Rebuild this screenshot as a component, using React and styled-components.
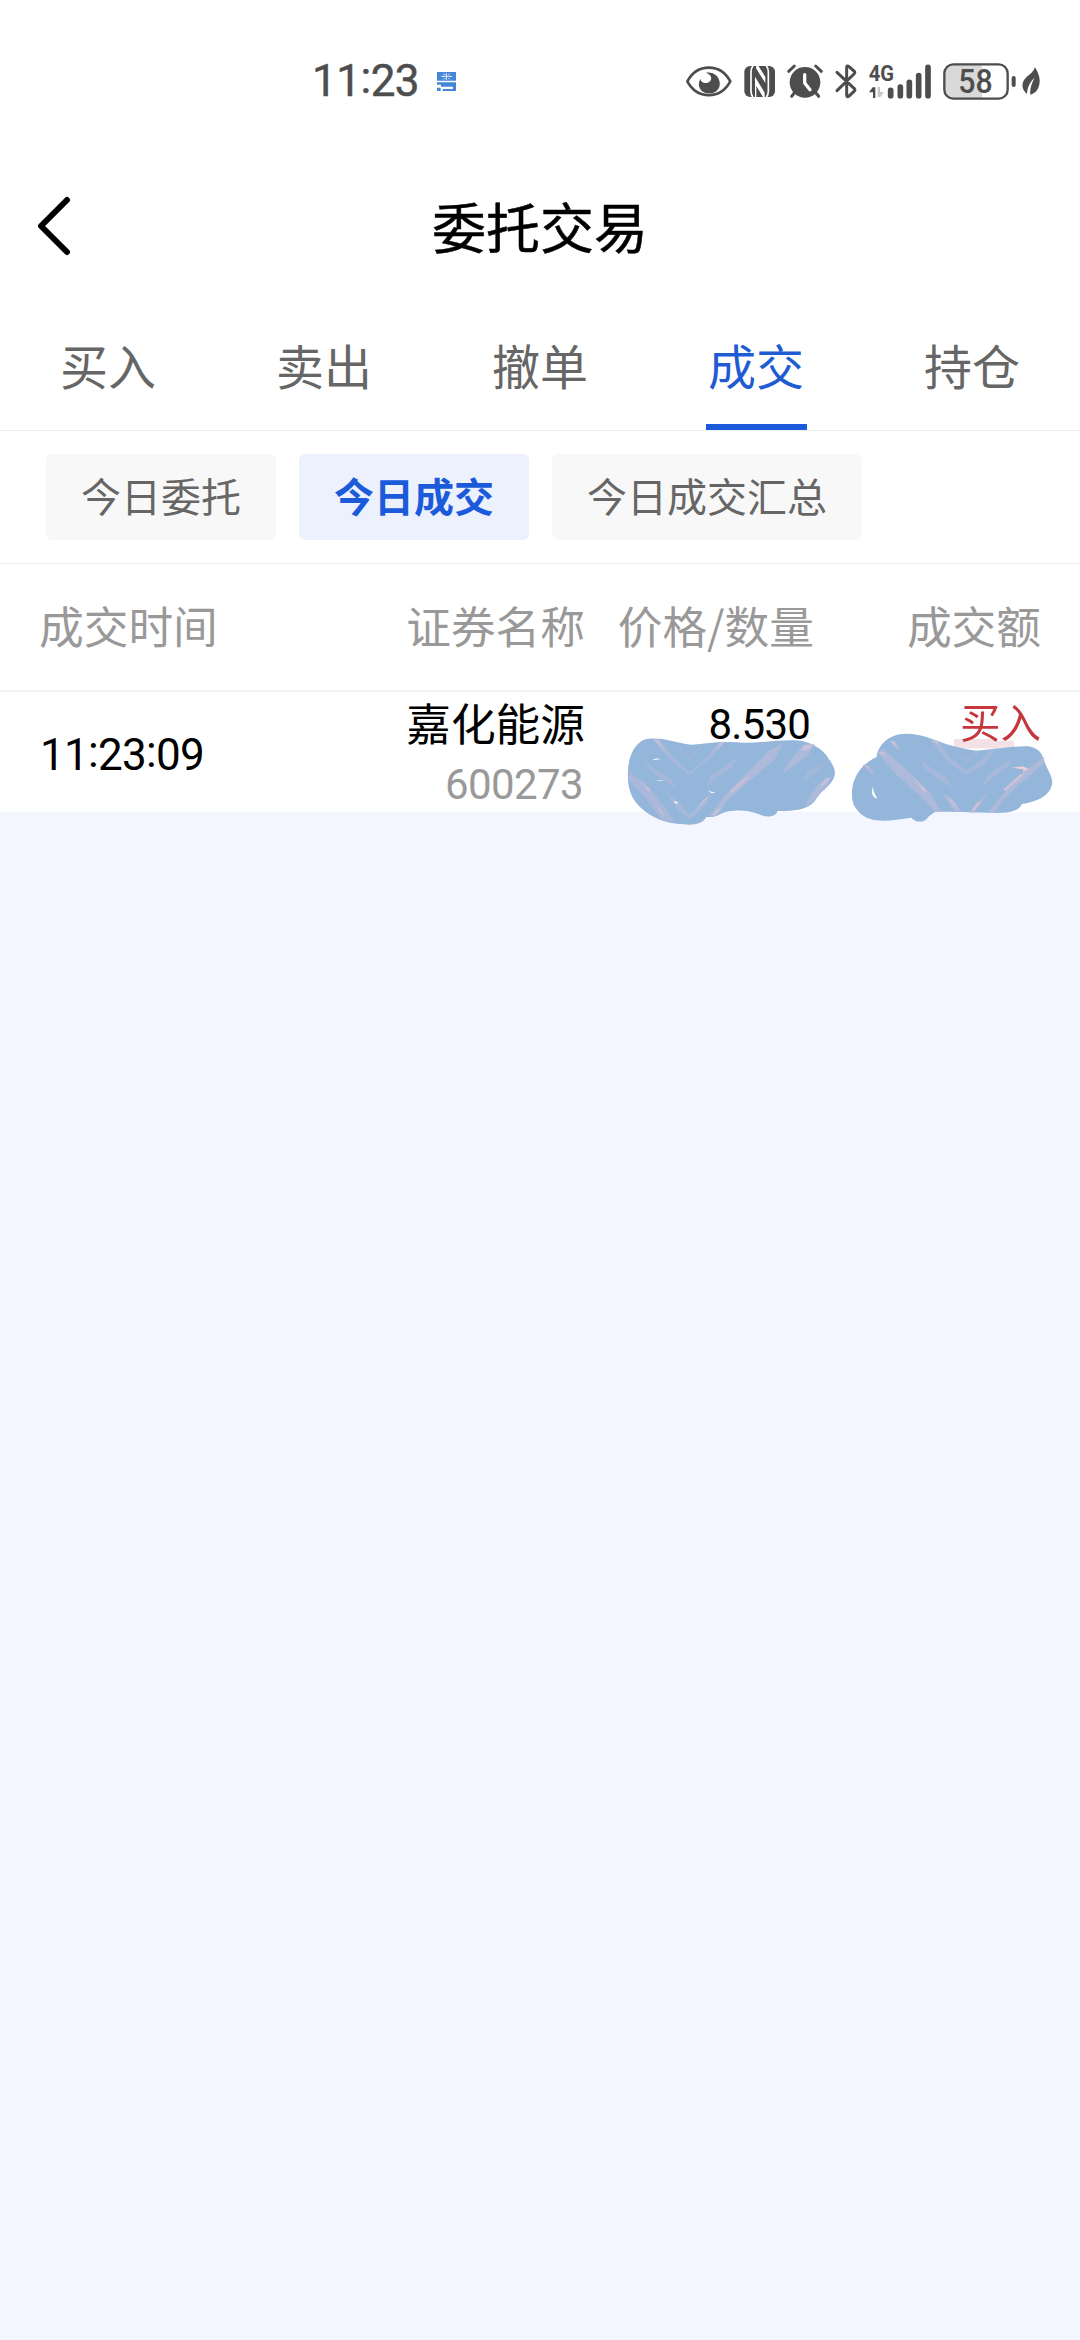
import { Fragment } from "react";
import styled, { createGlobalStyle } from "styled-components";

const tabs = ["买入", "卖出", "撤单", "成交", "持仓"];
const filters = ["今日委托", "今日成交", "今日成交汇总"];

export default function App() {
  return (
    <>
      <GlobalStyle />
      <Screen>
        <StatusBar />
        <Header>
          <BackIcon viewBox="0 0 36 60">
            <path d="M31 4 L5 30 L31 56" />
          </BackIcon>
          <Title>委托交易</Title>
        </Header>
        <Tabs>
          {tabs.map((tab) => (
            <Tab key={tab} $active={tab === "成交"}>{tab}</Tab>
          ))}
        </Tabs>
        <Filters>
          {filters.map((filter) => (
            <Chip key={filter} $active={filter === "今日成交"}>{filter}</Chip>
          ))}
        </Filters>
        <TableHead>
          <span>成交时间</span>
          <span>证券名称</span>
          <span>价格/数量</span>
          <span>成交额</span>
        </TableHead>
        <Row>
          <TimeCell><Clock time="11:23:09" /></TimeCell>
          <Cell>
            <StockName>嘉化能源</StockName>
            <StockCode>600273</StockCode>
          </Cell>
          <Cell>
            <Price>8.530</Price>
          </Cell>
          <Cell>
            <Side>买入</Side>
          </Cell>
          <AmountMask />
          <TotalMask />
        </Row>
      </Screen>
    </>
  )
}

function Clock({ time }) {
  return time.split(":").map((part, index) => (
    <Fragment key={index}>
      {index > 0 && <Colon>:</Colon>}
      {part}
    </Fragment>
  ))
}

function StatusBar() {
  return (
    <Status>
      <StatusTime><Clock time="11:23" /></StatusTime>
      <AppIcon viewBox="0 0 57 57">
        <path fill="#4387d6" d="M0 0H57V26H0Z M0 31H57V57H17V51H48V44H12V38H0Z M0 47H11V57H0Z" />
        <path stroke="#e8f2ff" strokeWidth="3" d="M28 3V24 M13 13H45 M19 5L23 9 M38 5L34 9 M19 22L23 18 M38 22L34 18" />
      </AppIcon>
      <Icons>
        <Icon $width={48} viewBox="45 60 144 120">
          <path d="M52 121 C82 66 151 66 181 121 C151 176 82 176 52 121Z" fill="none" stroke="#4d4d4d" strokeWidth="8" strokeLinejoin="round" />
          <path d="M107 96 C126 99 130 119 113 125 C101 129 92 122 91 114 C80 133 90 157 117 157 C141 157 154 139 148 119 C143 101 124 91 107 96Z" />
        </Icon>
        <Icon $width={33} $gap={10} viewBox="219 60 99 120">
          <rect x="223" y="75" width="92" height="93" rx="17" />
          <path d="M249 74 Q243 82 243 92 V150 Q243 162 249 169 M289 74 Q295 82 295 92 V150 Q295 162 289 169" fill="none" stroke="#fff" strokeWidth="5" />
          <path d="M259 74 L265 74 L286 108 V126 L258 82Z M255 107 L284 155 V168 H279 L259 135 V168 H255Z" fill="#fff" />
        </Icon>
        <Icon $width={38} $gap={10} viewBox="348 60 114 120">
          <circle cx="405" cy="124" r="46" />
          <path d="M356 91 L373 75 M454 91 L437 75 M374 154 L365 166 M436 154 L446 166" fill="none" stroke="#4d4d4d" strokeWidth="9" strokeLinecap="round" />
          <path d="M404 101 V126 L420 146" fill="none" stroke="#fff" strokeWidth="10" strokeLinecap="round" strokeLinejoin="round" />
        </Icon>
        <Icon $width={24} $gap={10} viewBox="492 60 72 120">
          <path d="M501 94 L553 143 Q557 147 552 151 L536 166 Q530 169 530 163 V80 Q530 72 536 76 L552 90 Q557 94 552 99 L501 149" fill="none" stroke="#4d4d4d" strokeWidth="9" strokeLinecap="round" strokeLinejoin="round" />
        </Icon>
        <Icon $width={64} $gap={10} viewBox="24 60 192 120">
          <text x="26" y="120" fontSize="66" fontWeight="700" fontFamily="Roboto, sans-serif" textLength="76" lengthAdjust="spacingAndGlyphs">4G</text>
          <path d="M27 154 L38 139 H46 V171 H39 V154Z" />
          <path d="M53 138 H60 V152 L71 153 L61 169 H53Z" fill="#c9c9c9" />
          <path d="M92 148 V164 M121 138 V164 M148 124 V164 M176 104 V164 M204 79 V164" fill="none" stroke="#4d4d4d" strokeWidth="17" strokeLinecap="round" />
        </Icon>
        <Icon $width={74} $gap={10} viewBox="246 60 222 120">
          <path d="M278 70 H366 V173 H278 Q252 173 252 147 V96 Q252 70 278 70Z" fill="#d9d9d9" />
          <rect x="253" y="70" width="190" height="103" rx="27" fill="none" stroke="#4d4d4d" strokeWidth="7" />
          <rect x="455" y="105" width="12" height="33" rx="6" />
          <text x="295" y="156" fontSize="97" fontWeight="500" fontFamily="Roboto, sans-serif" textLength="103" lengthAdjust="spacingAndGlyphs">58</text>
        </Icon>
        <Icon $width={20} $gap={5} viewBox="483 60 60 120">
          <path d="M525 79 C532 91 539 104 539 119 C539 142 527 157 511 161 C509 144 514 128 524 110 C509 124 502 139 501 159 C484 146 482 123 500 108 C512 98 521 92 525 79Z" />
        </Icon>
      </Icons>
    </Status>
  )
}

// hand-painted strokes over the traded quantity
function AmountMask() {
  return (
    <Mask $left={615} viewBox="0 0 690 420">
      <path fill="#94b6db" d="M100 131 C150 126 185 145 232 149 C275 147 310 137 380 143 C430 145 490 134 540 136 C590 138 625 165 640 190 C655 210 662 225 659 240 C654 262 640 272 628 284 C610 296 607 310 596 322 C575 345 530 350 488 348 C482 368 450 368 432 358 C400 345 350 342 318 356 C300 368 285 366 274 366 C262 388 235 391 205 388 C150 384 110 370 75 336 C45 308 36 270 39 225 C42 175 65 135 100 131Z" />
      <g fill="#b3bbd8" opacity="0.85">
        <path d="M112 132 L134 133 L174 185 L222 232 L262 200 L312 142 L330 140 L290 185 L223 240 L165 195Z" opacity=".75" />
        <path d="M180 146 L224 187 L266 146 L226 198Z" opacity=".5" />
        <path d="M40 228 L110 285 L182 382 L140 374 L92 310 L40 252Z" opacity=".85" />
        <path d="M86 190 L120 222 L168 254 L186 284 L148 258 L108 228Z" opacity=".65" />
        <path d="M368 184 L350 218 L310 244 L272 278 L286 244 L326 216Z" opacity=".65" />
        <path d="M505 143 L480 192 L410 253 L340 312 L306 362 L282 366 L330 300 L400 230 L458 170Z" />
        <path d="M600 146 L575 186 L530 216 L500 238 L520 204 L556 160Z" />
        <path d="M152 288 L186 318 L224 360 L262 318 L294 286 L272 330 L224 374 L188 344Z" opacity=".8" />
        <path d="M652 245 L630 280 L598 316 L568 337 L592 290 L620 258Z" />
        <path d="M448 143 L425 163 L437 144Z M652 195 L600 238 L554 269 L580 225Z M470 286 L448 308 L462 288Z" opacity=".5" />
      </g>
      <path fill="#ccc1d9" opacity=".85" d="M116 133 L128 134 L152 170Z M70 250 L108 286 L102 291Z M118 318 L150 364 L140 358Z M316 142 L328 141 L306 166Z M390 248 L404 246 L350 295 L345 287Z M310 340 L318 343 L300 361 L290 361Z M564 150 L598 146 L580 165 L558 167Z M632 250 L646 248 L630 268 L612 276Z M272 310 L284 304 L260 328 L246 335Z" />
      <path fill="#fff" d="M112 196 Q120 187 137 192 Q124 194 112 196Z M123 258 Q138 253 148 256 Q136 258 123 258Z M277 284 L289 290 L302 292 L290 295Z M175 318 L190 322 L183 326Z" />
    </Mask>
  )
}

// same brush over the traded amount
function TotalMask() {
  return (
    <Mask $left={840} viewBox="0 0 690 420">
      <path fill="#f4e1e5" d="M342 132 H465 V137 H522 V160 H342Z" />
      <path fill="#94b6db" d="M198 116 C245 117 275 131 320 148 C350 156 385 165 410 167 C470 162 525 152 565 154 C590 158 605 170 610 192 C620 222 636 240 637 262 C634 295 602 320 546 327 C538 345 515 354 470 354 C400 352 330 350 286 350 C276 357 265 363 261 371 C248 384 226 382 214 368 C175 372 145 380 110 376 C65 370 36 338 36 302 C34 255 58 210 110 186 C114 150 145 117 198 116Z" />
      <g fill="#b3bbd8" opacity="0.85">
        <path d="M112 172 L130 162 L206 230 L270 292 L304 350 L284 350 L242 305 L160 230Z" />
        <path d="M270 134 L294 138 L330 186 L378 228 L420 198 L452 164 L470 162 L430 212 L378 240 L318 196Z" opacity=".75" />
        <path d="M340 158 L379 193 L406 167 L416 167 L379 203Z" opacity=".5" />
        <path d="M240 188 L270 216 L318 246 L338 282 L292 250 L254 222Z" opacity=".65" />
        <path d="M522 184 L506 214 L456 250 L424 280 L442 240 L490 206Z" opacity=".65" />
        <path d="M612 186 L614 204 L548 260 L486 320 L464 354 L444 353 L486 300 L550 230Z" />
        <path d="M306 292 L338 312 L364 350 L344 350Z M442 292 L424 326 L404 352 L388 352 L410 322Z" />
        <path d="M148 137 L168 140 L184 170 L164 158Z M68 208 L86 212 L106 238 L88 232Z" />
      </g>
      <path fill="#d1c2d8" opacity=".85" d="M114 172 L128 171 L140 184Z M214 240 L260 288 L252 292Z M150 138 L163 140 L174 158Z M272 136 L290 139 L302 153Z M322 310 L336 315 L356 347Z M540 238 L556 235 L497 289 L490 283Z M410 324 L422 320 L402 349 L394 349Z M70 208 L84 213 L94 225Z" />
      <path fill="#f1cdd5" d="M514 218 L548 214 L566 222 L548 230 L550 223Z" />
      <path fill="#fff" d="M98 276 C100 290 106 300 112 311 C97 308 93 292 98 276Z" />
    </Mask>
  )
}

const GlobalStyle = createGlobalStyle`
  * {
    box-sizing: border-box;
  }
  body {
    margin: 0;
    background-color: #F3F6FE;
    font-family: "Noto Sans CJK SC", sans-serif;
  }
`

const Screen = styled.div`
  width: 1080px;
  height: 2340px;
  overflow: hidden;
  background-color: #F3F6FE;
`

const Status = styled.div`
  display: flex;
  align-items: center;
  height: 162px;
  padding-left: 312px;
  padding-right: 39px;
  background-color: #FFFFFF;
`

const StatusTime = styled.span`
  width: 125px;
  font-family: Roboto, sans-serif;
  font-size: 44px;
  line-height: 60px;
  letter-spacing: -0.5px;
  color: #4D4D4D;
  -webkit-text-stroke: 0.5px #4D4D4D;
`

const Colon = styled.span`
  display: inline-block;
  line-height: 1;
  vertical-align: 3px;
`

const AppIcon = styled.svg`
  width: 19px;
  height: 19px;
`

const Icons = styled.div`
  display: flex;
  align-items: center;
  margin-left: auto;
`

const Icon = styled.svg`
  width: ${({ $width }) => $width}px;
  height: 40px;
  margin-left: ${({ $gap }) => $gap || 0}px;
  fill: #4D4D4D;
`

const Header = styled.div`
  display: grid;
  grid-template-columns: 36px 1fr 36px;
  align-items: center;
  height: 128px;
  padding: 0 36px;
  background-color: #FFFFFF;
`

const BackIcon = styled.svg`
  width: 36px;
  height: 60px;
  fill: none;
  stroke: #000000;
  stroke-width: 6;
  stroke-linecap: round;
  stroke-linejoin: round;
`

const Title = styled.h1`
  margin: 0;
  padding-bottom: 1px;
  font-size: 54px;
  font-weight: 400;
  line-height: 80px;
  text-align: center;
  color: #000000;
  -webkit-text-stroke: 0.5px #000000;
`

const Tabs = styled.div`
  display: grid;
  grid-template-columns: repeat(5, 1fr);
  justify-items: center;
  height: 141px;
  background-color: #FFFFFF;
  border-bottom: 1px solid #EEEEEE;
`

const Tab = styled.div`
  width: 101px;
  height: 140px;
  padding-top: 39px;
  font-size: 48px;
  line-height: 70px;
  text-align: center;
  color: ${({ $active }) => $active ? "#1F5BD2" : "#666666"};
  border-bottom: 6px solid ${({ $active }) => $active ? "#1B5BDB" : "transparent"};
`

const Filters = styled.div`
  display: flex;
  align-items: center;
  gap: 23px;
  height: 133px;
  padding-left: 46px;
  background-color: #FFFFFF;
  border-bottom: 1px solid #EEEEEE;
`

const Chip = styled.div`
  height: 86px;
  padding: 0 35px;
  border-radius: 6px;
  font-size: 40px;
  font-weight: ${({ $active }) => $active ? 700 : 400};
  line-height: 83px;
  color: ${({ $active }) => $active ? "#1B5BDB" : "#666666"};
  background-color: ${({ $active }) => $active ? "#ECF1FD" : "#F8F8F8"};
`

const TableHead = styled.div`
  display: grid;
  grid-template-columns: 200px 346px 229px 227px;
  align-items: center;
  height: 128px;
  padding: 0 39px 4px;
  font-size: 44.7px;
  line-height: 64px;
  color: #999999;
  background-color: #FFFFFF;
  border-bottom: 2px solid #F1F4F4;

  span:not(:first-child) {
    text-align: right;
  }
`

const Row = styled.div`
  position: relative;
  display: grid;
  grid-template-columns: 200px 346px 228px 228px;
  height: 120px;
  padding: 0 39px;
  background-color: #FFFFFF;
`

const TimeCell = styled.div`
  align-self: center;
  padding-left: 1px;
  font-family: Roboto, sans-serif;
  font-size: 44px;
  line-height: 60px;
  letter-spacing: -0.7px;
  white-space: nowrap;
  color: #000000;
`

const Cell = styled.div`
  text-align: right;
`

const StockName = styled.div`
  font-size: 44.7px;
  line-height: 60px;
  color: #000000;
`

const StockCode = styled.div`
  padding-right: 2px;
  font-family: Roboto, sans-serif;
  font-size: 42px;
  line-height: 66px;
  letter-spacing: -0.6px;
  color: #999999;
`

const Price = styled.div`
  padding-right: 3px;
  font-family: Roboto, sans-serif;
  font-size: 42px;
  line-height: 66px;
  letter-spacing: -0.8px;
  color: #000000;
`

const Side = styled.div`
  position: relative;
  z-index: 1;
  font-size: 40.5px;
  line-height: 58px;
  color: #C5373D;
`

const Mask = styled.svg`
  position: absolute;
  top: 3px;
  left: ${({ $left }) => $left}px;
  width: 230px;
  height: 140px;
`
